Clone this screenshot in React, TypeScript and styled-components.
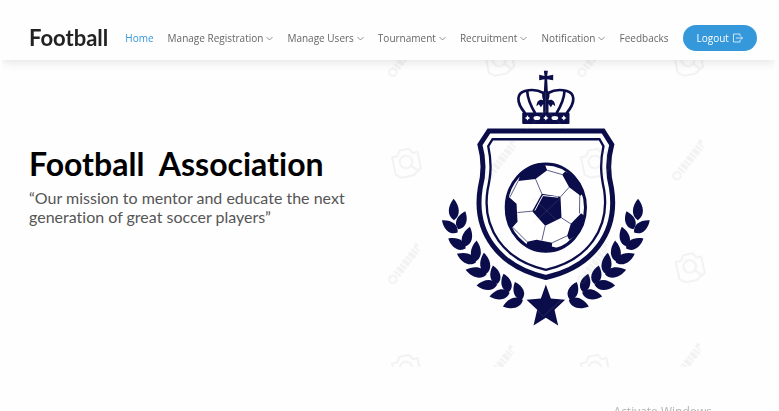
import React from "react";
import styled, { createGlobalStyle } from "styled-components";

const GlobalStyle = createGlobalStyle`
  *, *::before, *::after { box-sizing: border-box; }
  body {
    margin: 0;
    background: #fefefe;
    color: #444;
    font-family: "Open Sans", "Noto Sans", sans-serif;
    font-variant-ligatures: none;
    overflow: hidden;
  }
`;

const Page = styled.div`
  margin: 0 4px 0 2px;
`;

const Header = styled.header`
  position: relative;
  display: flex;
  align-items: center;
  padding: 25px 18px 9px 27px;
  background: #fefefe;
  box-shadow: 0 2px 10px rgba(0, 0, 0, 0.11);
  clip-path: inset(0 0 -16px 0);
`;

const Brand = styled.a`
  margin-right: 17px;
  color: #222;
  font: 700 22px/26px Lato, sans-serif;
  text-decoration: none;
`;

const Nav = styled.nav`
  flex: 1;
  display: flex;
  align-items: center;
  justify-content: space-between;
`;

const NavLink = styled.a<{ $active?: boolean }>`
  display: inline-flex;
  align-items: center;
  gap: 3px;
  color: ${(p) => (p.$active ? "#3498db" : "#666")};
  font-size: 10px;
  line-height: 26px;
  white-space: nowrap;
  text-decoration: none;
`;

const LogoutButton = styled.button`
  display: inline-flex;
  align-items: center;
  gap: 4px;
  height: 26px;
  padding: 0 14px;
  border: 0;
  border-radius: 13px;
  background: #3498db;
  color: #fff;
  font: 400 10px/26px "Open Sans", sans-serif;
  cursor: pointer;
`;

const Hero = styled.main`
  display: grid;
  grid-template-columns: 378fr 395fr;
  align-items: start;
`;

const HeroText = styled.section`
  padding: 85px 24px 0 27px;
`;

const Title = styled.h1`
  margin: 0;
  color: #000;
  font: 700 32px/38px Lato, sans-serif;
  font-variant-ligatures: none;
  white-space: pre;
`;

const Mission = styled.p`
  margin: 5px 0 0;
  color: #555;
  font: 400 16px/19px Lato, sans-serif;
  font-variant-ligatures: none;
`;

const EmblemArt = styled.svg`
  display: block;
  width: 86%;
  height: auto;
`;

const SystemNotice = styled.div`
  position: fixed;
  right: 67px;
  bottom: -9px;
  color: #b4b4b4;
  font: 400 12px/16px "Open Sans", sans-serif;
`;

const Chevron = () => (
  <svg width="7" height="7" viewBox="0 0 14 14" fill="none" stroke="#777" strokeWidth="1.6" aria-hidden="true">
    <path d="M1 4l6 6 6-6" />
  </svg>
);

const ExitIcon = () => (
  <svg width="10" height="10" viewBox="0 0 20 20" fill="none" stroke="#fff" strokeWidth="1.5" aria-hidden="true">
    <path d="M14 6V2H1v16h13v-4M6 10h13M15.500 6.500L19 10l-3.500 3.500" />
  </svg>
);

const NAVY = "#0b0d4a";

/* Each leaf: tip x, tip y, base x, base y */
const LEAVES = [
  [221, 417, 222, 481],
  [186, 481, 233, 518], [256, 454, 235, 508],
  [205, 536, 257, 566], [270, 501, 254, 561],
  [231, 582, 288, 608], [290, 542, 286, 606],
  [257, 630, 320, 644], [312, 579, 319, 642],
  [290, 677, 352, 675], [339, 617, 352, 673],
  [329, 710, 389, 699], [371, 642, 387, 697],
  [369, 740, 429, 721], [405, 667, 426, 720],
];

const leafPath = ([tx, ty, bx, by]: number[]) => {
  const dx = bx - tx;
  const dy = by - ty;
  const len = Math.hypot(dx, dy);
  const nx = (-dy / len) * 25;
  const ny = (dx / len) * 25;
  const at = (t: number, s: number) => `${tx + dx * t + nx * s} ${ty + dy * t + ny * s}`;
  return `M${tx} ${ty}C${at(0.35, 0.75)} ${at(0.8, 0.85)} ${bx} ${by}C${at(0.8, -0.85)} ${at(0.35, -0.75)} ${tx} ${ty}Z`;
};

const CAMERAS = [[78, 306], [645, 306], [930, 620], [78, 925], [645, 925], [358, 0], [925, 0]];
const STAMPS = [[72, 616], [925, 305], [360, 305], [72, -6], [640, -6], [355, 922], [918, 916], [640, 616]];

const Watermarks = () => (
  <g stroke="#888" strokeWidth="6" fill="none" opacity="0.1">
    {CAMERAS.map(([x, y]) => (
      <g key={`${x}-${y}`} transform={`translate(${x} ${y}) rotate(-12)`}>
        <path d="M-38 -22h16l10-15h28l10 15h14v50l-26 16h-34l-18-12z" />
        <circle r="19" />
        <path d="M12 14l18 18" />
      </g>
    ))}
    {STAMPS.map(([x, y]) => (
      <g key={`${x}-${y}`} transform={`translate(${x} ${y}) rotate(-52)`}>
        <circle cx="-54" r="11" />
        <path d="M-36 0H64" strokeWidth="24" strokeDasharray="7 5 12 4" />
        <circle cx="70" cy="-8" r="3" />
      </g>
    ))}
  </g>
);

const CrownHalf = () => (
  <g>
    <path d="M436 160C405 123 413 99 435 93C454 88 475 90 491 99" fill="none" strokeWidth="8" />
    <path d="M442 93C443 119 456 143 466 160" fill="none" strokeWidth="8" />
    <path d="M492 94C484 101 487 112 490 121C482 116 470 121 470 139L477 133L483 142L490 132V160H498V92Z" stroke="none" />
  </g>
);

const Emblem = () => (
  <EmblemArt viewBox="0 0 1020 921" role="img" aria-label="Football association crest">
    <defs>
      <clipPath id="ball"><ellipse cx="498" cy="443" rx="122" ry="134" /></clipPath>
    </defs>
    <g fill={NAVY} stroke={NAVY}>
      <path d="M492 32h12l-2 16 18-4v17l-18-3 2 38h-12l2-38-16 3v-17l16 4z" stroke="none" />
      <CrownHalf />
      <g transform="translate(996 0) scale(-1 1)"><CrownHalf /></g>
      <rect x="427" y="158" width="142" height="34" rx="3" stroke="none" />
      <g fill="#fff" stroke="none">
        <path d="M443 166l3 5 5 3-5 3-3 5-3-5-5-3 5-3zM498 166l3 5 5 3-5 3-3 5-3-5-5-3 5-3zM552 166l3 5 5 3-5 3-3 5-3-5-5-3 5-3z" />
        <ellipse cx="471" cy="174" rx="10" ry="6" />
        <ellipse cx="525" cy="174" rx="10" ry="6" />
      </g>
      <path d="M327 213H670L696 254C682 304 684 342 695 384C717 520 636 622 498 653C360 622 279 520 301 384C312 342 314 304 300 254Z" fill="none" strokeWidth="15" />
      <path d="M338 238H659L671 259C660 309 663 345 673 390C691 506 624 602 498 630C372 602 305 506 323 390C333 345 336 309 325 259Z" fill="none" strokeWidth="7" />
      {LEAVES.map((leaf) => <path key={leaf.join()} d={leafPath(leaf)} stroke="none" />)}
      <g transform="translate(996 0) scale(-1 1)">
        {LEAVES.map((leaf) => <path key={leaf.join()} d={leafPath(leaf)} stroke="none" />)}
      </g>
      <path d="M498 674L513 716L556 720L524 750L535 797L498 774L461 797L472 750L440 720L483 716Z" stroke="none" />
      <ellipse cx="498" cy="443" rx="123" ry="135" fill="#fff" stroke="none" />
      <g clipPath="url(#ball)" stroke="none">
        <path d="M415 363L422 342L400 340L450 300H520L496 316L502 331L467 357Z" />
        <path d="M547 344L556 335L600 360L622 440L607 403L602 408L568 382Z" />
        <path d="M370 410L388 412L410 432L413 486L398 502L370 500Z" />
        <path d="M604 460L616 470L600 520L568 540L562 528L573 492Z" />
        <path d="M442 546L470 540L517 549L516 560L540 566L500 590L420 565L441 553Z" />
        <path d="M486 402L542 411L545 474L496 498L457 454Z" />
      </g>
      <path d="M467 357L486 402M568 382L542 411M413 458L457 454M545 474L573 492M496 498L486 542M502 331L547 344M415 363L390 412M398 502L442 546M517 549L562 528M600 403L599 461" fill="none" strokeWidth="2" />
      <path d="M465 452L489 407L535 412" stroke="#fff" fill="none" strokeWidth="3" />
      <ellipse cx="498" cy="443" rx="119" ry="131" fill="none" strokeWidth="9" />
    </g>
    <Watermarks />
    <path d="M440 210L500 150L560 210M461 490L540 416M461 416L540 490M456 735L490 770L545 720" fill="none" stroke="#aaa" strokeWidth="2" opacity="0.25" />
  </EmblemArt>
);

const MENUS = ["Manage Registration", "Manage Users", "Tournament", "Recruitment", "Notification"];

export default function App() {
  return (
    <>
      <GlobalStyle />
      <Page>
        <Header>
          <Brand href="#">Football</Brand>
          <Nav aria-label="Main">
            <NavLink href="#" $active aria-current="page">Home</NavLink>
            {MENUS.map((label) => (
              <NavLink key={label} href="#">{label}<Chevron /></NavLink>
            ))}
            <NavLink href="#">Feedbacks</NavLink>
            <LogoutButton type="button">Logout<ExitIcon /></LogoutButton>
          </Nav>
        </Header>
        <Hero>
          <HeroText>
            <Title>{"Football  Association"}</Title>
            <Mission>“Our mission to mentor and educate the next generation of great soccer players”</Mission>
          </HeroText>
          <Emblem />
        </Hero>
      </Page>
      <SystemNotice>Activate Windows</SystemNotice>
    </>
  );
}
